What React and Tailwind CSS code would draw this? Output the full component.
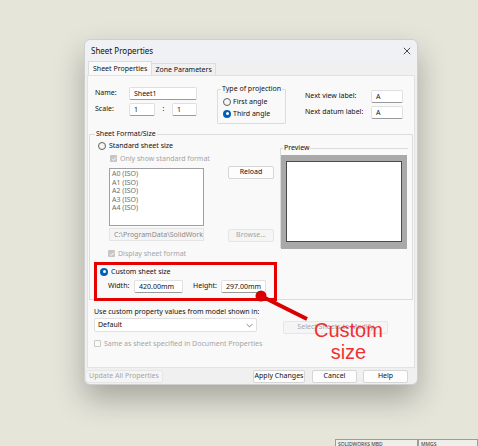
import React from "react";

const font = { fontFamily: '"Noto Sans", "Open Sans", Arial, sans-serif' };

function Radio({ checked }) {
  return checked ? (
    <span className="w-[8px] h-[8px] rounded-full bg-[#005fb8] flex items-center justify-center shrink-0">
      <span className="w-[3px] h-[3px] rounded-full bg-white" />
    </span>
  ) : (
    <span className="w-[8px] h-[8px] rounded-full border border-[#5f5f5f] bg-[#f6f6f6] shrink-0" />
  );
}

function Check({ disabled, checked }) {
  if (checked)
    return (
      <span className="w-[7px] h-[7px] rounded-[1px] bg-[#c6c6c6] flex items-center justify-center shrink-0">
        <svg width="6" height="6" viewBox="0 0 10 10">
          <path d="M2 5.2 4.2 7.3 8.2 2.8" fill="none" stroke="#fff" strokeWidth="1.6" />
        </svg>
      </span>
    );
  return <span className={"w-[7px] h-[7px] rounded-[1px] border shrink-0 " + (disabled ? "border-[#c9c9c9]" : "border-[#777]")} />;
}

function Field({ w, children, className = "" }) {
  return (
    <div
      className={
        "h-[13px] bg-white border border-[#e0e0e0] border-b-[#9a9a9a] rounded-[2px] pl-[4px] text-[7px] leading-[11px] text-[#111] " +
        className
      }
      style={{ width: w }}
    >
      {children}
    </div>
  );
}

function Btn({ w, children, disabled, className = "" }) {
  return (
    <div
      className={
        "h-[13px] rounded-[2px] border flex items-center justify-center text-[7px] " +
        (disabled ? "bg-[#f5f5f5] border-[#e6e6e6] text-[#a5a5a5]" : "bg-[#fdfdfd] border-[#d6d6d6] text-[#111]") +
        " " +
        className
      }
      style={{ width: w }}
    >
      {children}
    </div>
  );
}

export default function App() {
  return (
    <div className="w-[478px] h-[446px] bg-[#e5e5da] overflow-hidden relative" style={font}>
      <div className="pt-[39px] pl-[84px]">
        <div className="w-[334px] h-[346px] bg-[#f0f0f0] rounded-[6px] border border-[#cfcfcf] shadow-[0_14px_30px_rgba(0,0,0,0.28)] flex flex-col">
          {/* title bar */}
          <div className="h-[21px] flex items-center justify-between pl-[6px] pr-[6px] bg-[#eff1f5] rounded-t-[6px]">
            <span className="text-[8px] text-[#111]">Sheet Properties</span>
            <svg width="8" height="8" viewBox="0 0 10 10">
              <path d="M1 1 9 9M9 1 1 9" stroke="#333" strokeWidth="1.1" />
            </svg>
          </div>
          {/* tabs */}
          <div className="flex pl-[3px] h-[14px] items-end">
            <div className="h-[14px] px-[4px] bg-[#f9f9f9] border border-b-0 border-[#dcdcdc] text-[7px] leading-[13px] text-[#111]">
              Sheet Properties
            </div>
            <div className="h-[12px] px-[3px] border-t border-r border-[#dcdcdc] text-[7px] leading-[11px] text-[#111]">
              Zone Parameters
            </div>
          </div>
          {/* panel */}
          <div className="mx-[2px] h-[293px] bg-[#f9f9f9] border border-[#e2e2e2] relative">
            {/* top row */}
            <div className="flex pt-[11px]">
              <div className="ml-[7px] w-[103px] flex flex-col gap-[3px]">
                <div className="flex items-center">
                  <span className="w-[34px] text-[7px] text-[#111]">Name:</span>
                  <Field w={68}>Sheet1</Field>
                </div>
                <div className="flex items-center">
                  <span className="w-[34px] text-[7px] text-[#111]">Scale:</span>
                  <Field w={26}>1</Field>
                  <span className="w-[17px] text-center text-[7px] text-[#111]">:</span>
                  <Field w={25}>1</Field>
                </div>
              </div>
              <div className="ml-[19px] mt-[2px] w-[69px] h-[35px] border border-[#dcdcdc] rounded-[1px] relative">
                <span className="absolute -top-[6px] left-[3px] bg-[#f9f9f9] px-[1px] text-[7px] leading-[10px] text-[#111]">
                  Type of projection
                </span>
                <div className="pt-[7px] pl-[5px] flex flex-col gap-[3px] text-[7px] text-[#111]">
                  <div className="flex items-center gap-[2px] leading-[9px]">
                    <Radio /> First angle
                  </div>
                  <div className="flex items-center gap-[2px] leading-[9px]">
                    <Radio checked /> Third angle
                  </div>
                </div>
              </div>
              <div className="ml-[19px] mt-[3px] flex flex-col gap-[3px]">
                <div className="flex items-center">
                  <span className="w-[66px] text-[7px] text-[#111]">Next view label:</span>
                  <Field w={32}>A</Field>
                </div>
                <div className="flex items-center">
                  <span className="w-[66px] text-[7px] text-[#111]">Next datum label:</span>
                  <Field w={32}>A</Field>
                </div>
              </div>
            </div>

            {/* Sheet Format/Size group */}
            <div className="mt-[10px] mx-[1px] h-[166px] border border-[#dcdcdc] relative">
              <span className="absolute -top-[6px] left-[5px] bg-[#f9f9f9] px-[1px] text-[7px] leading-[10px] text-[#111]">
                Sheet Format/Size
              </span>
              <div className="flex">
                <div className="w-[190px]">
                  <div className="mt-[6px] ml-[8px] flex items-center gap-[3px] text-[7px] leading-[9px] text-[#111]">
                    <Radio /> Standard sheet size
                  </div>
                  <div className="mt-[4px] ml-[20px] flex items-center gap-[3px] text-[7px] leading-[9px] text-[#a5a5a5]">
                    <Check checked /> Only show standard format
                  </div>
                  <div className="mt-[5px] ml-[19px] flex items-start">
                    <div className="w-[95px] h-[58px] bg-white border border-[#a0a0a0] pl-[2px] pt-[1px] text-[7px] leading-[8.5px] text-[#6e6e6e]">
                      <div>A0 (ISO)</div>
                      <div>A1 (ISO)</div>
                      <div>A2 (ISO)</div>
                      <div>A3 (ISO)</div>
                      <div>A4 (ISO)</div>
                    </div>
                    <Btn w={46} className="ml-[24px] -mt-[2px]">Reload</Btn>
                  </div>
                  <div className="mt-[2px] ml-[19px] flex items-start">
                    <div className="w-[95px] h-[13px] bg-[#f5f5f5] border border-[#e4e4e4] pl-[4px] text-[7px] leading-[11px] text-[#8a8a8a] overflow-hidden whitespace-nowrap">
                      C:\ProgramData\SolidWork:
                    </div>
                    <Btn w={46} disabled className="ml-[24px] mt-[1px]">Browse...</Btn>
                  </div>
                  <div className="mt-[7px] ml-[18px] flex items-center gap-[3px] text-[7px] leading-[9px] text-[#a5a5a5]">
                    <Check checked /> Display sheet format
                  </div>
                  <div className="mt-[9px] ml-[10px] flex items-center gap-[3px] text-[7px] leading-[9px] text-[#111]">
                    <Radio checked /> Custom sheet size
                  </div>
                  <div className="mt-[4px] ml-[18px] flex items-center text-[7px] text-[#111]">
                    <span className="w-[26px]">Width:</span>
                    <Field w={49}>420.00mm</Field>
                    <span className="ml-[10px] w-[28px]">Height:</span>
                    <Field w={45}>297.00mm</Field>
                  </div>
                </div>
                <div className="ml-[0px] mt-[13px] w-[128px] h-[100px] border-t border-l border-[#dcdcdc] relative">
                  <span className="absolute -top-[6px] left-[2px] bg-[#f9f9f9] px-[1px] text-[7px] leading-[10px] text-[#111]">
                    Preview
                  </span>
                  <div className="mt-[6px] w-[126px] h-[94px] bg-[#a9a9a9] flex items-start justify-center pt-[6px]">
                    <div className="w-[116px] h-[81px] bg-white border border-[#4a4a4a]" />
                  </div>
                </div>
              </div>
            </div>

            {/* below group */}
            <div className="mt-[7px] ml-[6px] text-[7px] leading-[9px] text-[#111]">
              Use custom property values from model shown in:
            </div>
            <div className="mt-[2px] ml-[6px] flex items-start">
              <div className="w-[163px] h-[14px] bg-white border border-[#e0e0e0] rounded-[2px] flex items-center justify-between px-[3px] text-[7px] text-[#111]">
                <span>Default</span>
                <svg width="7" height="5" viewBox="0 0 10 6">
                  <path d="M1 1 5 5 9 1" fill="none" stroke="#555" strokeWidth="1" />
                </svg>
              </div>
              <Btn w={105} disabled className="ml-[26px] mt-[3px]">Select Sheets to Modify</Btn>
            </div>
            <div className="mt-[5px] ml-[6px] flex items-center gap-[3px] text-[7px] leading-[9px] text-[#a5a5a5]">
              <Check disabled /> Same as sheet specified in Document Properties
            </div>

            {/* annotation */}
            <div className="absolute left-[6px] top-[186px] w-[183px] h-[39px] border-[3px] border-[#e60000]" />
            <svg className="absolute left-[165px] top-[213px]" width="60" height="35" viewBox="0 0 60 35">
              <line x1="8" y1="7" x2="54" y2="30" stroke="#d80000" strokeWidth="4" />
              <circle cx="8" cy="7" r="5.5" fill="#d80000" />
            </svg>
            <div className="absolute left-[226px] top-[243px] text-[20px] leading-[22px] text-[#f03030] text-center" style={{ fontFamily: '"Liberation Sans", Arial, sans-serif' }}>
              Custom
              <br />
              size
            </div>
          </div>

          {/* bottom buttons */}
          <div className="flex items-center mt-[2px] pl-[0px] pr-[9px]">
            <Btn w={78} disabled className="rounded-l-[4px]">Update All Properties</Btn>
            <Btn w={52} className="ml-auto">Apply Changes</Btn>
            <Btn w={45} className="ml-[7px]">Cancel</Btn>
            <Btn w={45} className="ml-[6px]">Help</Btn>
          </div>
        </div>
      </div>

      {/* status fragments at bottom right */}
      <div className="absolute left-[335px] top-[439px] flex">
        <div className="w-[83px] h-[10px] border border-[#9c9c9c] bg-[#eeeeea] text-[5px] leading-[8px] pl-[2px] text-[#333] overflow-hidden whitespace-nowrap">
          SOLIDWORKS MBD
        </div>
        <div className="w-[60px] h-[10px] border border-[#9c9c9c] bg-[#eeeeea] text-[5px] leading-[8px] pl-[2px] text-[#333]">
          MMGS
        </div>
      </div>
    </div>
  );
}
